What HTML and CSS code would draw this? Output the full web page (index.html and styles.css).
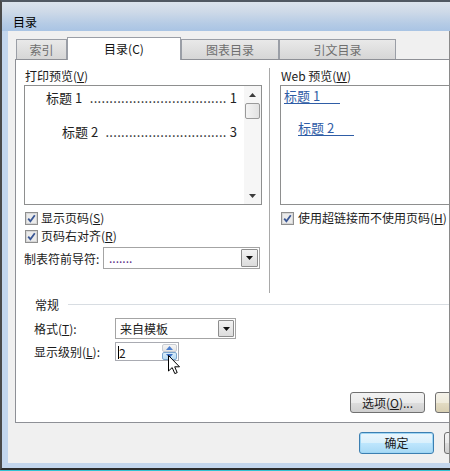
FILE: index.html
```html
<!DOCTYPE html>
<html lang="zh-CN">
<head>
<meta charset="utf-8">
<title>目录</title>
<link rel="stylesheet" href="styles.css">
</head>
<body>
<div class="window">
  <div class="frame">
    <div class="titlebar">目录</div>
    <div class="lower">
      <div class="client">
        <div class="tabs">
          <div class="tab t1">索引</div>
          <div class="tab active t2">目录(<u>C</u>)</div>
          <div class="tab t3">图表目录</div>
          <div class="tab t4">引文目录</div>
        </div>
        <div class="panel">
          <div class="cols">
            <div class="col-left">
              <div class="head">打印预览(<u>V</u>)</div>
              <div class="preview">
                <div class="preview-body">
                  <div class="toc-row l1"><span>标题 1</span><span class="dots">...................................</span><span>1</span></div>
                  <div class="toc-row l2"><span>标题 2</span><span class="dots">...............................</span><span>3</span></div>
                </div>
                <div class="vscroll">
                  <div class="sbtn"><svg width="7" height="4" viewBox="0 0 7 4"><polygon points="3.5,0 7,4 0,4" fill="#3c3c3c"/></svg></div>
                  <div class="thumb"></div>
                  <div class="track"></div>
                  <div class="sbtn"><svg width="7" height="4" viewBox="0 0 7 4"><polygon points="0,0 7,0 3.5,4" fill="#3c3c3c"/></svg></div>
                </div>
              </div>
              <div class="check-row first">
                <svg class="cb" width="13" height="13" viewBox="0 0 13 13"><rect x="0.5" y="0.5" width="12" height="12" fill="#f4f4f4" stroke="#8f8f8f"/><rect x="1.5" y="1.5" width="10" height="10" fill="#ebebeb" stroke="#d6d6d6"/><path d="M3.2 6.6 L5.4 9.2 L9.8 3.2" fill="none" stroke="#3a5795" stroke-width="1.8"/></svg>
                <span class="cb-text">显示页码(<u>S</u>)</span>
              </div>
              <div class="check-row">
                <svg class="cb" width="13" height="13" viewBox="0 0 13 13"><rect x="0.5" y="0.5" width="12" height="12" fill="#f4f4f4" stroke="#8f8f8f"/><rect x="1.5" y="1.5" width="10" height="10" fill="#ebebeb" stroke="#d6d6d6"/><path d="M3.2 6.6 L5.4 9.2 L9.8 3.2" fill="none" stroke="#3a5795" stroke-width="1.8"/></svg>
                <span class="cb-text">页码右对齐(<u>R</u>)</span>
              </div>
              <div class="leader-row">
                <span class="leader-label">制表符前导符:</span>
                <div class="select leader-select">
                  <span class="sel-value leader-value">.......</span>
                  <span class="dd"><svg width="7" height="4" viewBox="0 0 7 4"><polygon points="0,0 7,0 3.5,4" fill="#111"/></svg></span>
                </div>
              </div>
            </div>
            <div class="vsep"></div>
            <div class="col-right">
              <div class="head">Web 预览(<u>W</u>)</div>
              <div class="webbox">
                <span class="link l1">标题 1</span>
                <span class="link l2">标题 2</span>
              </div>
              <div class="check-row first">
                <svg class="cb" width="13" height="13" viewBox="0 0 13 13"><rect x="0.5" y="0.5" width="12" height="12" fill="#f4f4f4" stroke="#8f8f8f"/><rect x="1.5" y="1.5" width="10" height="10" fill="#ebebeb" stroke="#d6d6d6"/><path d="M3.2 6.6 L5.4 9.2 L9.8 3.2" fill="none" stroke="#3a5795" stroke-width="1.8"/></svg>
                <span class="cb-text wide">使用超链接而不使用页码(<u>H</u>)</span>
              </div>
            </div>
          </div>
          <div class="group-head">
            <span>常规</span>
            <span class="group-line"></span>
          </div>
          <div class="form-row fmt">
            <span class="form-label">格式(<u>T</u>):</span>
            <div class="select fmt-select">
              <span class="sel-value">来自模板</span>
              <span class="dd"><svg width="7" height="4" viewBox="0 0 7 4"><polygon points="0,0 7,0 3.5,4" fill="#111"/></svg></span>
            </div>
          </div>
          <div class="form-row lvl">
            <span class="form-label">显示级别(<u>L</u>):</span>
            <div class="spin">
              <span class="spin-value"><span class="caret"></span>2</span>
              <div class="spin-btns">
                <span class="sp up"><svg width="7" height="4" viewBox="0 0 7 4"><polygon points="3.5,0 7,4 0,4" fill="#4d7fcf"/></svg></span>
                <span class="sp down"><svg width="7" height="4" viewBox="0 0 7 4"><polygon points="0,0 7,0 3.5,4" fill="#3b6fc4"/></svg></span>
              </div>
            </div>
          </div>
          <div class="panel-actions">
            <button class="btn">选项(<u>O</u>)...</button>
            <button class="btn edge" aria-label="修改"></button>
          </div>
        </div>
        <div class="dialog-actions">
          <button class="btn focus">确定</button>
          <button class="btn" aria-label="取消"></button>
        </div>
      </div>
    </div>
  </div>
  <svg class="cursor" width="14" height="20" viewBox="0 0 14 20"><path d="M0.5 0.5 L0.5 16 L4.2 12.6 L6.8 18.6 L9.2 17.6 L6.7 11.8 L11.5 11.8 Z" fill="#fff" stroke="#000" stroke-width="1" stroke-linejoin="miter"/></svg>
</div>
</body>
</html>
```
FILE: styles.css
```css
* { box-sizing: border-box; }
html, body { margin: 0; padding: 0; }
body {
  width: 450px;
  height: 471px;
  overflow: hidden;
  background: #fff;
  font-family: "Noto Sans CJK SC", "Noto Sans", "DejaVu Sans", sans-serif;
  font-size: 12px;
  color: #1b1b1b;
}
u { text-decoration: underline; text-underline-offset: 1px; }

.window {
  position: relative;
  width: 450px;
  height: 471px;
  border-bottom: 1px solid #33c3d3;
}
.frame {
  height: 470px;
  border-top: 2px solid #505862;
  border-left: 2px solid #4a4a4a;
  border-bottom: 2px solid #2c2c2c;
  background: #c3d6ed;
  display: flex;
  flex-direction: column;
}
.titlebar {
  height: 29px;
  padding: 12px 0 0 11px;
  line-height: 16px;
  color: #000;
  background: linear-gradient(180deg, #dbe3ec 0%, #cdd9e8 35%, #b5cbe5 75%, #a9c4e4 100%);
}
.lower {
  flex: 1;
  display: flex;
  padding: 0 0 5px 6px;
}
.client {
  flex: 1;
  background: #f0f0f0;
  border-right: 1px solid #8a8a8a;
  padding: 6px 0 0 7px;
  overflow: hidden;
}

/* tabs */
.tabs {
  display: flex;
  align-items: flex-end;
  height: 22px;
  padding-left: 1px;
}
.tab {
  height: 20px;
  border: 1px solid #9a9ea6;
  border-bottom: none;
  background: linear-gradient(180deg, #e9e9e9, #d6d6d6);
  color: #6e6e6e;
  display: flex;
  justify-content: center;
  padding-top: 3px;
  line-height: 14px;
}
.t1 { width: 51px; }
.t2 { width: 114px; }
.t3 { width: 98px; }
.t4 { width: 117px; }
.tab.active {
  position: relative;
  z-index: 1;
  height: 23px;
  margin-bottom: -1px;
  background: #fff;
  color: #111;
  padding-top: 4px;
}
.tab u { text-decoration: none; }

/* panel */
.panel {
  height: 364px;
  border: 1px solid #8e9096;
  border-right: none;
  background: #fff;
  overflow: hidden;
}
.cols {
  display: flex;
  height: 235px;
  padding-left: 8px;
}
.col-left {
  width: 238px;
  display: flex;
  flex-direction: column;
}
.col-right {
  flex: 1;
  display: flex;
  flex-direction: column;
}
.head {
  margin-top: 8px;
  margin-bottom: 1px;
  line-height: 16px;
  padding-left: 1px;
}
.preview {
  height: 120px;
  border: 1px solid #8e8f8f;
  display: flex;
}
.preview-body {
  flex: 1;
  padding-top: 4px;
}
.toc-row {
  display: flex;
  justify-content: space-between;
  font-size: 13px;
  line-height: 16px;
  padding-right: 7px;
  white-space: nowrap;
  color: #222;
}
.toc-row.l1 { padding-left: 21px; }
.toc-row.l2 { padding-left: 37px; margin-top: 18px; }
.dots {
  margin-left: auto;
  margin-right: 3px;
  letter-spacing: 0.3px;
}
.vscroll {
  width: 17px;
  display: flex;
  flex-direction: column;
  background: #f6f6f6;
}
.sbtn {
  height: 17px;
  display: flex;
  align-items: center;
  justify-content: center;
}
.thumb {
  height: 16px;
  margin: 0 1px;
  border: 1px solid #9a9a9a;
  border-radius: 2px;
  background: linear-gradient(90deg, #f4f4f4, #e2e2e2);
}
.track { flex: 1; }

.check-row {
  display: flex;
  align-items: center;
  height: 18px;
  padding-left: 1px;
}
.check-row.first { margin-top: 4px; }
.cb { flex: none; }
.cb-text { margin-left: 3px; line-height: 16px; }
.cb-text.wide { margin-left: 4px; }

.leader-row {
  display: flex;
  align-items: center;
  margin-top: 2px;
  height: 22px;
}
.leader-label { width: 79px; }
.select {
  display: flex;
  align-items: center;
  border: 1px solid #a4a4a4;
  background: #fff;
  padding: 1px;
}
.leader-select { width: 157px; height: 22px; }
.sel-value { flex: 1; padding-left: 3px; line-height: 16px; }
.leader-value { color: #5b2d86; padding-left: 4px; }
.dd {
  width: 17px;
  height: 100%;
  border: 1px solid #8d8d8d;
  border-radius: 1px;
  background: linear-gradient(180deg, #f3f3f3, #dcdcdc);
  display: flex;
  align-items: center;
  justify-content: center;
}

.vsep {
  width: 1px;
  background: #a9a9a9;
  margin: 8px 10px 2px 7px;
}
.webbox {
  height: 120px;
  border: 1px solid #8e8f8f;
  border-right: none;
  padding-top: 3px;
  display: flex;
  flex-direction: column;
  align-items: flex-start;
}
.link {
  color: #2f5da6;
  font-size: 13px;
  line-height: 14px;
  border-bottom: 1px solid #2f5da6;
  padding-right: 20px;
}
.link.l1 { margin-left: 3px; }
.link.l2 { margin-left: 17px; margin-top: 17px; }

/* general group */
.group-head {
  display: flex;
  align-items: center;
  height: 16px;
  margin-top: 1px;
  padding-left: 19px;
}
.group-line {
  flex: 1;
  height: 1px;
  margin-left: 9px;
  background: #d8dde2;
}
.form-row {
  display: flex;
  align-items: center;
  padding-left: 18px;
}
.form-row.fmt { margin-top: 6px; height: 21px; }
.form-row.lvl { margin-top: 3px; height: 19px; }
.form-label { width: 81px; }
.fmt-select { width: 121px; height: 21px; }
.fmt-select .dd { width: 16px; }
.spin {
  width: 64px;
  height: 19px;
  border: 1px solid #a9abb2;
  display: flex;
  padding: 1px 1px 0 2px;
}
.spin-value { flex: 1; display: flex; align-items: center; line-height: 15px; }
.caret { width: 1px; height: 13px; background: #000; }
.spin-btns { width: 15px; display: flex; flex-direction: column; }
.sp {
  height: 8px;
  display: flex;
  align-items: center;
  justify-content: center;
  border: 1px solid #c9ccd2;
  border-radius: 2px;
  background: linear-gradient(180deg, #f5f5f5, #e4e4e4);
}
.sp.down {
  border-color: #7ba5cd;
  background: linear-gradient(180deg, #d8ecf9, #b9dcf4);
}

/* buttons */
.btn {
  flex: none;
  width: 75px;
  height: 21px;
  border: 1px solid #707070;
  border-radius: 3px;
  background: linear-gradient(180deg, #f2f2f2 0%, #ebebeb 50%, #dddddd 51%, #cfcfcf 100%);
  font-family: inherit;
  font-size: 12px;
  color: #1b1b1b;
  padding: 0;
  line-height: 16px;
}
.btn.edge {
  background: linear-gradient(180deg, #f4f2ea 0%, #efebdc 50%, #e3dcc4 51%, #d8cfb2 100%);
}
.panel-actions {
  display: flex;
  justify-content: flex-end;
  gap: 10px;
  margin-top: 31px;
  margin-right: -61px;
}
.dialog-actions {
  display: flex;
  justify-content: flex-end;
  gap: 10px;
  margin-top: 9px;
  margin-right: -70px;
}
.dialog-actions .btn { height: 22px; }
.btn.focus {
  border-color: #3c7fb1;
  box-shadow: inset 0 0 0 1px #9fd6f5;
  background: linear-gradient(180deg, #eaf6fd 0%, #d9f0fc 50%, #bee6fd 51%, #a7d9f5 100%);
}

.cursor {
  position: absolute;
  left: 168px;
  top: 355px;
}
```
